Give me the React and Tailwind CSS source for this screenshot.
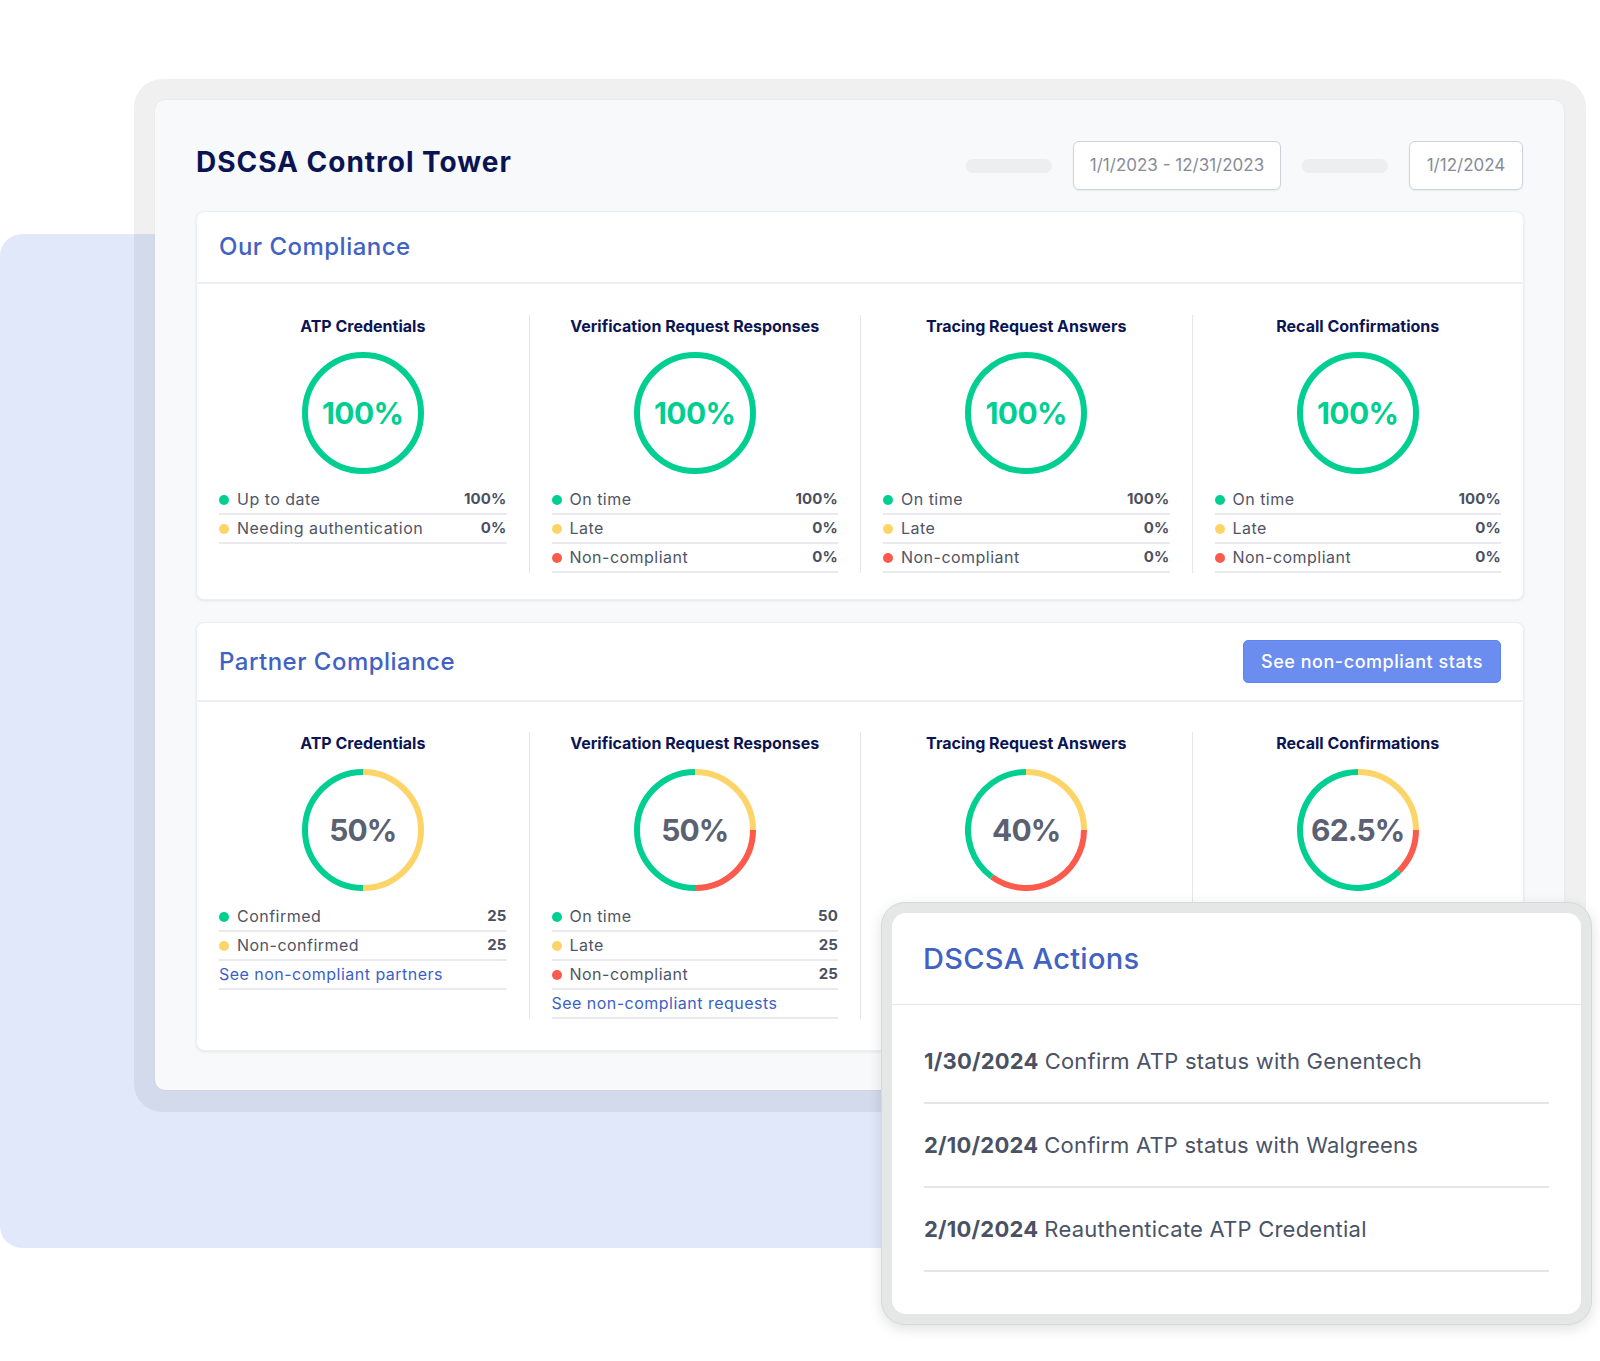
import React from "react";

const GREEN = "#00cf91";
const YELLOW = "#fdd468";
const RED = "#fb5a4c";

const ourStats = [
  {
    title: "ATP Credentials",
    rows: [
      { color: GREEN, label: "Up to date", value: "100%" },
      { color: YELLOW, label: "Needing authentication", value: "0%" },
    ],
  },
  {
    title: "Verification Request Responses",
    rows: [
      { color: GREEN, label: "On time", value: "100%" },
      { color: YELLOW, label: "Late", value: "0%" },
      { color: RED, label: "Non-compliant", value: "0%" },
    ],
  },
  {
    title: "Tracing Request Answers",
    rows: [
      { color: GREEN, label: "On time", value: "100%" },
      { color: YELLOW, label: "Late", value: "0%" },
      { color: RED, label: "Non-compliant", value: "0%" },
    ],
  },
  {
    title: "Recall Confirmations",
    rows: [
      { color: GREEN, label: "On time", value: "100%" },
      { color: YELLOW, label: "Late", value: "0%" },
      { color: RED, label: "Non-compliant", value: "0%" },
    ],
  },
];

// the last two partner columns have their legends covered by the actions card
const partnerStats = [
  {
    title: "ATP Credentials",
    value: "50%",
    segments: [
      { color: YELLOW, from: 0, to: 0.5 },
      { color: GREEN, from: 0.5, to: 1 },
    ],
    rows: [
      { color: GREEN, label: "Confirmed", value: "25" },
      { color: YELLOW, label: "Non-confirmed", value: "25" },
    ],
    link: "See non-compliant partners",
  },
  {
    title: "Verification Request Responses",
    value: "50%",
    segments: [
      { color: YELLOW, from: 0, to: 0.25 },
      { color: RED, from: 0.25, to: 0.5 },
      { color: GREEN, from: 0.5, to: 1 },
    ],
    rows: [
      { color: GREEN, label: "On time", value: "50" },
      { color: YELLOW, label: "Late", value: "25" },
      { color: RED, label: "Non-compliant", value: "25" },
    ],
    link: "See non-compliant requests",
  },
  {
    title: "Tracing Request Answers",
    value: "40%",
    segments: [
      { color: YELLOW, from: 0, to: 0.25 },
      { color: RED, from: 0.25, to: 0.6 },
      { color: GREEN, from: 0.6, to: 1 },
    ],
    rows: [],
  },
  {
    title: "Recall Confirmations",
    value: "62.5%",
    segments: [
      { color: YELLOW, from: 0, to: 0.25 },
      { color: RED, from: 0.25, to: 0.375 },
      { color: GREEN, from: 0.375, to: 1 },
    ],
    rows: [],
  },
];

const actions = [
  { date: "1/30/2024", text: "Confirm ATP status with Genentech" },
  { date: "2/10/2024", text: "Confirm ATP status with Walgreens" },
  { date: "2/10/2024", text: "Reauthenticate ATP Credential" },
];

// angle fractions run clockwise from 12 o'clock
const point = (f, r) => {
  const a = f * Math.PI * 2;
  return [61 + r * Math.sin(a), 61 - r * Math.cos(a)];
};

const arc = (from, to, r) => {
  const [x1, y1] = point(from, r);
  const [x2, y2] = point(to, r);
  const large = to - from > 0.5 ? 1 : 0;
  return `M ${x1} ${y1} A ${r} ${r} 0 ${large} 1 ${x2} ${y2}`;
};

const Donut = ({ value, segments, full }) => (
  <div className="relative w-[122px] h-[122px]">
    <svg width="122" height="122" viewBox="0 0 122 122" className="absolute inset-0">
      {full ? (
        <circle cx="61" cy="61" r="58" fill="none" stroke={GREEN} strokeWidth="6" />
      ) : (
        segments.map((s, i) => (
          <path key={i} d={arc(s.from, s.to, 58)} fill="none" stroke={s.color} strokeWidth="6" />
        ))
      )}
    </svg>
    <div className="absolute inset-0 flex items-center justify-center">
      <span
        className={
          full
            ? "text-[30px] font-bold text-[#00cf91] tracking-[-0.02em]"
            : "text-[30px] font-bold text-[#5b6172] tracking-[-0.03em]"
        }
      >
        {value}
      </span>
    </div>
  </div>
);

const Row = ({ color, label, value }) => (
  <div className="flex items-center h-[29px] border-b-2 border-[#e9eaef]">
    <span className="w-[10px] h-[10px] rounded-full" style={{ backgroundColor: color }} />
    <span className="ml-[8px] -translate-y-[1px] text-[16px] text-[#4f5566] tracking-[0.03em]">{label}</span>
    <span className="ml-auto text-[15px] font-bold text-[#4b5060] tracking-[0.01em]">{value}</span>
  </div>
);

const StatColumn = ({ stat, first, partner }) => (
  <div className={first ? "px-[22px]" : "px-[22px] border-l border-[#e4e6ea]"}>
    <div className="flex flex-col items-center">
      <p className="h-[22px] leading-[22px] text-[16px] font-bold text-[#0c1552]">{stat.title}</p>
      <div className="mt-[15px]">
        {partner ? <Donut value={stat.value} segments={stat.segments} /> : <Donut value="100%" full />}
      </div>
    </div>
    <div className="mt-[12px]">
      {stat.rows.map((r, i) => (
        <Row key={i} {...r} />
      ))}
      {stat.link && (
        <div className="flex items-center h-[29px] border-b-2 border-[#e9eaef]">
          <span className="-translate-y-[1px] text-[16px] text-[#3c5fc6] tracking-[0.03em]">{stat.link}</span>
        </div>
      )}
    </div>
  </div>
);

export default function App() {
  return (
    <div className="relative w-[1600px] h-[1361px] bg-white overflow-hidden font-['Inter',sans-serif]">
      {/* blue backdrop */}
      <div className="absolute left-0 top-[234px] w-[1540px] h-[1014px] rounded-[22px] bg-[#e0e8fa]" />

      {/* window */}
      <div className="relative ml-[134px] mt-[79px] w-[1452px] h-[1033px] rounded-[28px] bg-black/[0.06] pt-[21px] pl-[21px]">
        <div className="w-[1409px] h-[990px] rounded-[10px] bg-[#f8f9fa] shadow-[0_0_2px_rgba(0,0,0,0.08)] p-[41px]">
          {/* header */}
          <div className="flex items-center h-[49px]">
            <h1 className="mb-[8px] text-[28px] font-bold text-[#0b1452] tracking-[0.035em]">
              DSCSA Control Tower
            </h1>
            <div className="ml-auto flex items-center gap-[21px]">
              <div className="w-[86px] h-[14px] rounded-full bg-[#eceeef]" />
              <div className="w-[208px] h-[49px] rounded-[6px] border border-[#cfd2d8] bg-white shadow-[0_1px_2px_rgba(0,0,0,0.06)] flex items-center justify-center text-[17px] text-[#878c98]">
                1/1/2023 - 12/31/2023
              </div>
              <div className="w-[86px] h-[14px] rounded-full bg-[#eceeef]" />
              <div className="w-[114px] h-[49px] rounded-[6px] border border-[#cfd2d8] bg-white shadow-[0_1px_2px_rgba(0,0,0,0.06)] flex items-center justify-center text-[17px] text-[#878c98]">
                1/12/2024
              </div>
            </div>
          </div>

          {/* our compliance */}
          <div className="mt-[21px] w-[1328px] rounded-[8px] bg-white border border-[#eceef1] shadow-[0_1px_3px_rgba(0,0,0,0.08)]">
            <div className="flex items-center h-[72px] px-[22px] border-b-2 border-[#eceef2]">
              <h2 className="text-[24px] font-medium text-[#4162c3] tracking-[0.02em]">Our Compliance</h2>
            </div>
            <div className="grid grid-cols-4 pt-[31px] pb-[26px]">
              {ourStats.map((s, i) => (
                <StatColumn key={i} stat={s} first={i === 0} />
              ))}
            </div>
          </div>

          {/* partner compliance */}
          <div className="mt-[22px] w-[1328px] rounded-[8px] bg-white border border-[#eceef1] shadow-[0_1px_3px_rgba(0,0,0,0.08)]">
            <div className="flex items-center h-[79px] px-[22px] border-b-2 border-[#eceef2]">
              <h2 className="text-[24px] font-medium text-[#4162c3] tracking-[0.02em]">Partner Compliance</h2>
              <button className="ml-auto w-[258px] h-[43px] rounded-[5px] bg-[#6a8def] border border-[#5f84ec] text-white text-[18px] font-medium tracking-[0.03em]">
                See non-compliant stats
              </button>
            </div>
            <div className="grid grid-cols-4 pt-[30px] pb-[31px]">
              {partnerStats.map((s, i) => (
                <StatColumn key={i} stat={s} first={i === 0} partner />
              ))}
            </div>
          </div>
        </div>
      </div>

      {/* actions card */}
      <div className="absolute left-[881px] top-[902px] w-[711px] h-[423px] rounded-[24px] bg-[#e5e6e6] border border-[#d7d8da] p-[10px] shadow-[0_4px_14px_rgba(0,0,0,0.12)]">
        <div className="w-full h-full rounded-[14px] bg-white">
          <div className="flex items-center h-[92px] pl-[31px] border-b border-[#e3e5ea]">
            <h3 className="text-[29px] font-medium text-[#4162c3] tracking-[0.01em]">DSCSA Actions</h3>
          </div>
          <div className="px-[32px] pt-[15px]">
            {actions.map((a, i) => (
              <div key={i} className="flex items-center h-[84px] border-b-2 border-[#e3e5ea] text-[22px] text-[#4b5366] tracking-[0.01em]">
                <span className="font-bold text-[#4a5163]">{a.date}</span>
                <span className="ml-[6px]">{a.text}</span>
              </div>
            ))}
          </div>
        </div>
      </div>
    </div>
  );
}
